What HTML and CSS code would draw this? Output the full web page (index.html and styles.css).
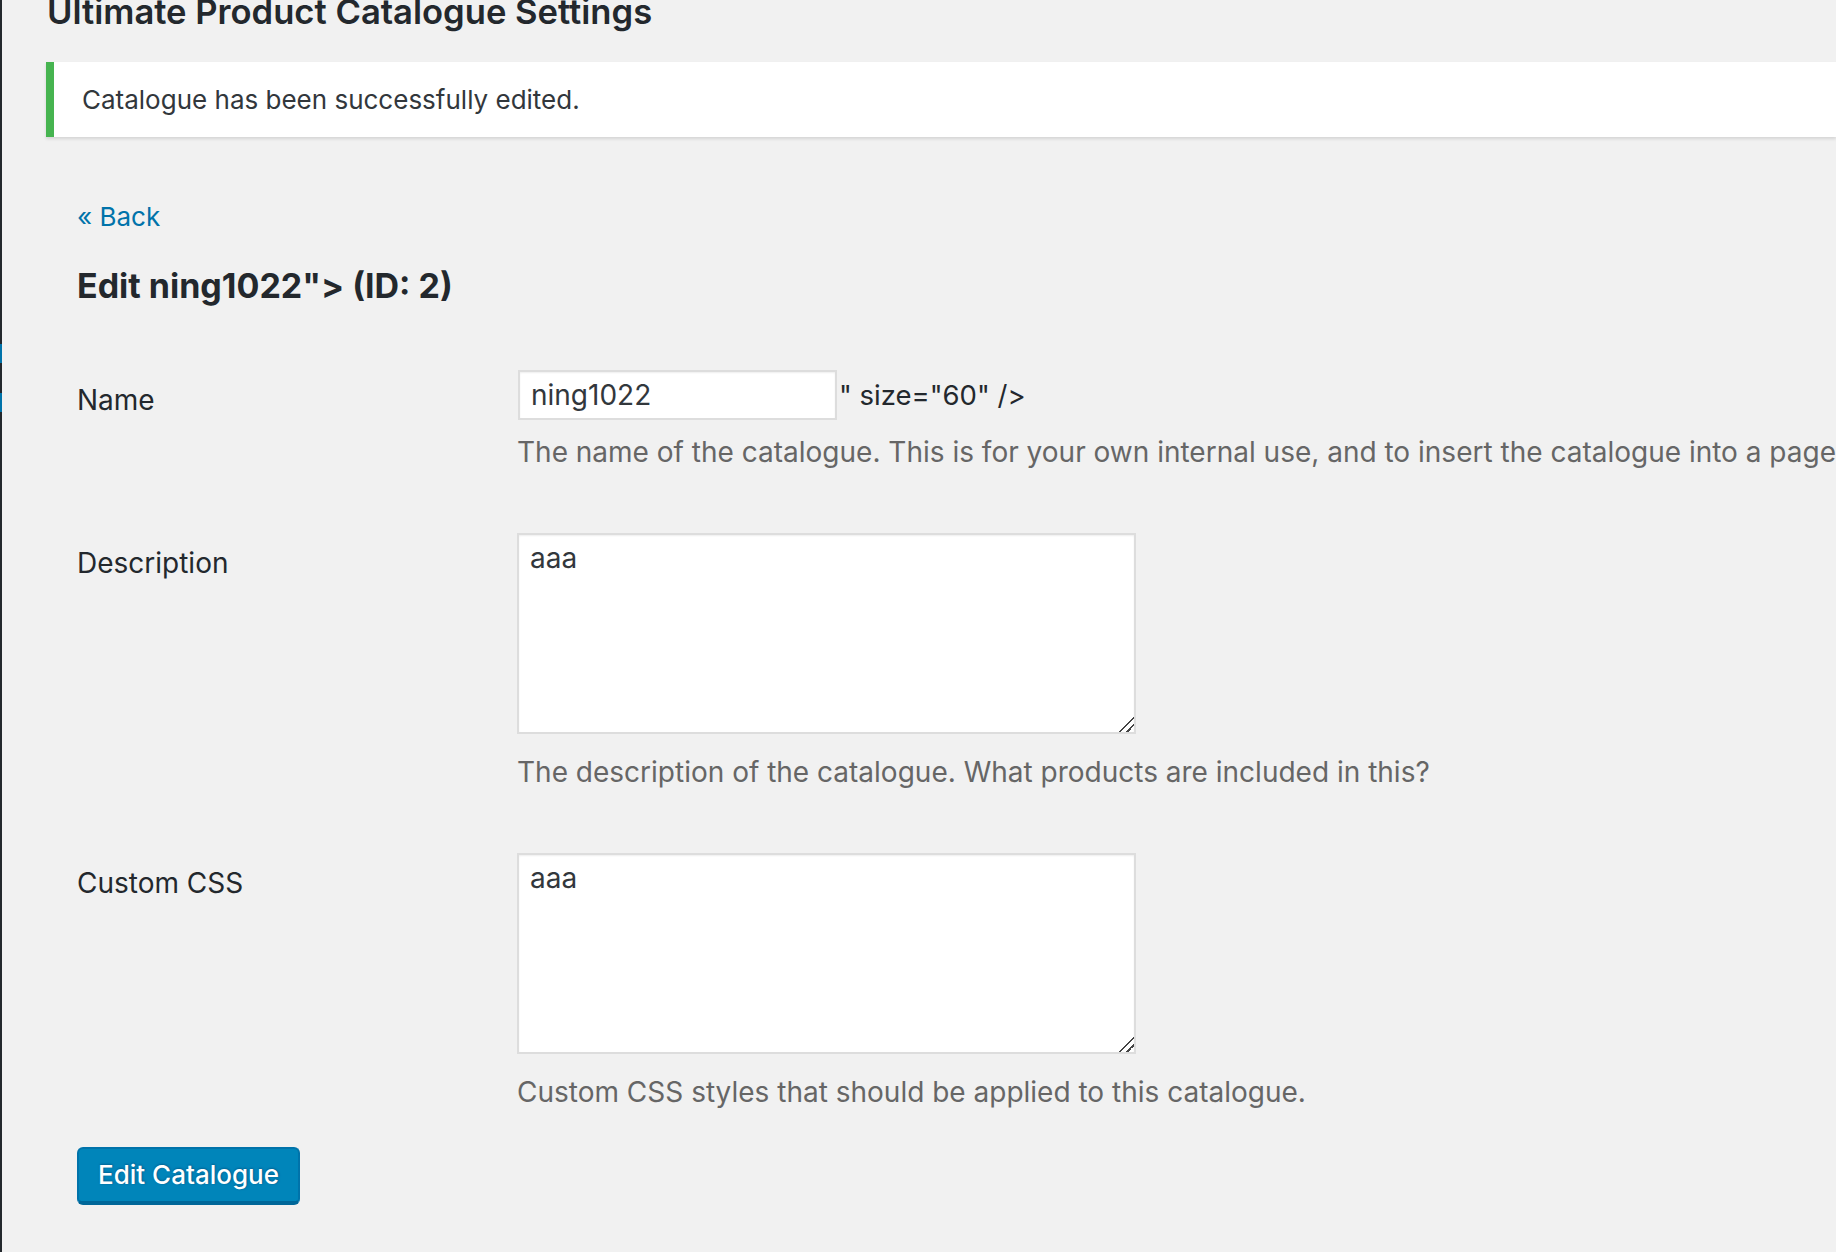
FILE: index.html
```html
<!DOCTYPE html>
<html>
<head>
<meta charset="utf-8">
<link rel="stylesheet" href="styles.css">
<title>Ultimate Product Catalogue Settings</title>
</head>
<body>
<div class="edge">
  <div class="edge-mark edge-mark-1"></div>
  <div class="edge-mark edge-mark-2"></div>
</div>
<div class="wrap">
  <h2 class="page-title">Ultimate Product Catalogue Settings</h2>
  <div class="notice"><p>Catalogue has been successfully edited.</p></div>
  <div class="content">
    <a class="back" href="#">« Back</a>
    <h3 class="edit-title">Edit ning1022"&gt; (ID: 2)</h3>
    <form class="form-table">
      <div class="row row-name">
        <label class="label">Name</label>
        <div class="field">
          <div class="inline"><input class="text-input" type="text" value="ning1022">" size="60" /&gt;</div>
          <p class="desc">The name of the catalogue. This is for your own internal use, and to insert the catalogue into a page</p>
        </div>
      </div>
      <div class="row">
        <label class="label">Description</label>
        <div class="field">
          <textarea class="area">aaa</textarea>
          <p class="desc">The description of the catalogue. What products are included in this?</p>
        </div>
      </div>
      <div class="row">
        <label class="label">Custom CSS</label>
        <div class="field">
          <textarea class="area">aaa</textarea>
          <p class="desc">Custom CSS styles that should be applied to this catalogue.</p>
        </div>
      </div>
      <button class="button-primary" type="button">Edit Catalogue</button>
    </form>
  </div>
</div>
</body>
</html>
```
FILE: styles.css
```css
html, body {
  margin: 0;
  padding: 0;
  height: 100%;
  overflow: hidden;
}
body {
  display: flex;
  background: #f1f1f1;
  font-family: Inter, "Noto Sans", sans-serif;
  color: #23282d;
}
.edge {
  width: 2px;
  flex: 0 0 2px;
  background: #23282d;
  display: flex;
  flex-direction: column;
}
.edge-mark {
  width: 2px;
  height: 19px;
  background: #0073aa;
}
.edge-mark-1 { margin-top: 344px; }
.edge-mark-2 { margin-top: 30px; }

.wrap {
  flex: 1;
  min-width: 0;
  padding-left: 44px;
}
.page-title {
  margin: -11px 0 0 1px;
  font-size: 34.6px;
  line-height: 44px;
  font-weight: 600;
  color: #23282d;
  white-space: nowrap;
}
.notice {
  margin-top: 29px;
  height: 75px;
  background: #fff;
  border-left: 8px solid #46b450;
  box-shadow: 0 2px 3px rgba(0,0,0,0.12);
  display: flex;
  align-items: center;
  padding-left: 28px;
}
.notice p {
  margin: 0;
  font-size: 26px;
  line-height: 36px;
  color: #32373c;
}
.content {
  padding-left: 31px;
  padding-top: 62px;
}
.back {
  display: block;
  font-size: 26px;
  line-height: 36px;
  color: #0073aa;
  text-decoration: none;
}
.edit-title {
  margin: 31px 0 0 0;
  font-size: 34px;
  line-height: 40px;
  font-weight: 700;
  color: #23282d;
}
.form-table {
  margin-top: 64px;
}
.row {
  display: grid;
  grid-template-columns: 440px 1fr;
  margin-bottom: 63px;
}
.label {
  padding-top: 12px;
  font-size: 28px;
  line-height: 36px;
  color: #23282d;
}
.field {
  min-width: 0;
}
.inline {
  display: flex;
  align-items: center;
  font-size: 27.5px;
  line-height: 36px;
  white-space: nowrap;
  color: #23282d;
}
.text-input {
  box-sizing: border-box;
  width: 319px;
  height: 50px;
  margin: 0 2px 0 1px;
  padding: 0 11px;
  border: 2px solid #dddddd;
  box-shadow: inset 0 1px 2px rgba(0,0,0,0.07);
  background: #fff;
  font-family: Inter, "Noto Sans", sans-serif;
  font-size: 28px;
  color: #32373c;
  outline: none;
}
.desc {
  margin: 14px 0 0 0;
  font-size: 28px;
  line-height: 36px;
  color: #666666;
  white-space: nowrap;
}
.area {
  display: block;
  box-sizing: border-box;
  width: 619px;
  height: 201px;
  margin: 0;
  padding: 5px 11px;
  border: 2px solid #dddddd;
  box-shadow: inset 0 1px 2px rgba(0,0,0,0.07);
  background: #fff;
  font-family: Inter, "Noto Sans", sans-serif;
  font-size: 28px;
  line-height: 36px;
  color: #32373c;
  outline: none;
}
.area::-webkit-resizer {
  background: linear-gradient(135deg,
    transparent 0, transparent 48%,
    #444 48%, #444 56%,
    transparent 56%, transparent 72%,
    #444 72%, #444 80%,
    transparent 80%);
}
.area + .desc {
  margin-top: 20px;
}
.row:last-of-type {
  margin-bottom: 37px;
}
.button-primary {
  box-sizing: border-box;
  width: 223px;
  height: 58px;
  padding: 0 0 2px 0;
  background: #0085ba;
  border: 2px solid #0073aa;
  border-bottom: 4px solid #006799;
  border-radius: 6px;
  color: #fff;
  font-family: Inter, "Noto Sans", sans-serif;
  font-size: 26px;
  font-weight: 500;
  text-shadow: 0 -1px 2px #006799, 1px 0 2px #006799;
  cursor: pointer;
}
```
